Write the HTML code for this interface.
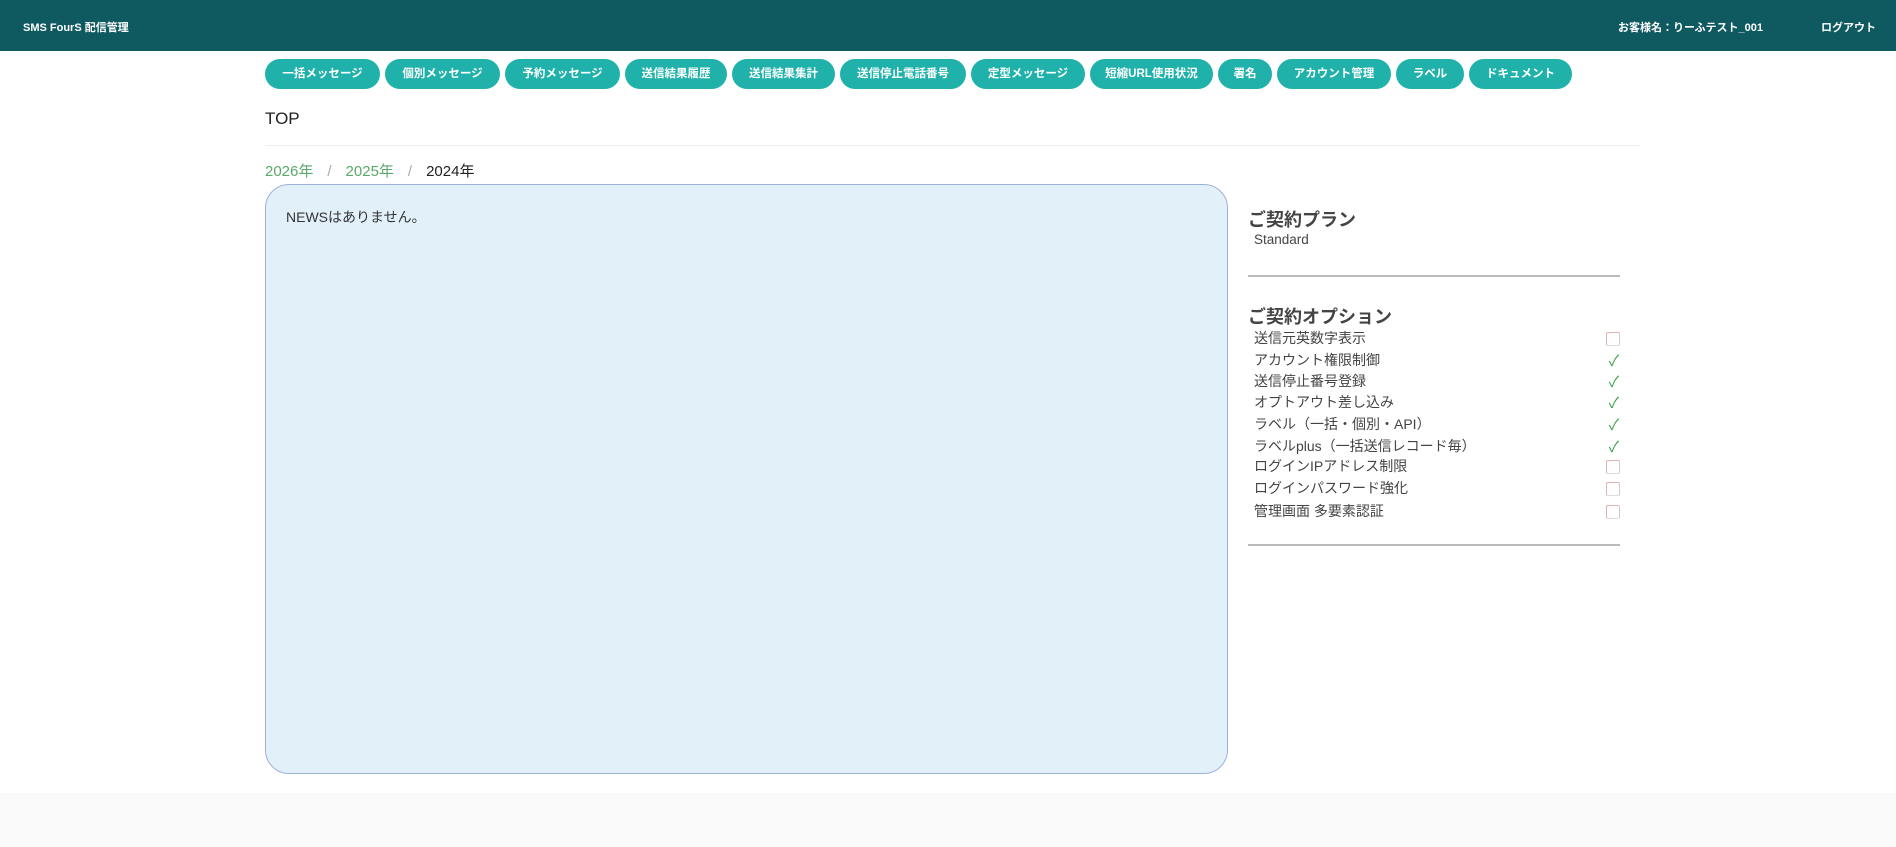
<!DOCTYPE html>
<html><head><meta charset="utf-8"><style>
*{margin:0;padding:0;box-sizing:border-box}
body{width:1896px;height:847px;overflow:hidden;background:#fff;font-family:"Liberation Sans","Noto Sans CJK JP",sans-serif;color:#333;position:relative}
.hd{position:absolute;left:0;top:0;width:1896px;height:51px;background:#0f5960;color:#fff;font-size:11px;font-weight:bold}
.hd span{position:absolute;top:19px}
.nav{position:absolute;top:59px;left:265px;display:flex;gap:5px}
.nav div{height:30px;line-height:30px;background:#20b2aa;color:#fff;font-size:11.5px;font-weight:bold;border-radius:15px;text-align:center}
.top{position:absolute;left:265px;top:109px;font-size:17px;color:#222}
.hr{position:absolute;left:265px;top:145px;width:1375px;height:1px;background:#eee}
.bc{position:absolute;left:265px;top:160px;font-size:15px;color:#222}
.bc a{color:#5aa86a}.bc i{font-style:normal;color:#aaa;margin:0 14px}
.news{position:absolute;left:265px;top:184px;width:963px;height:590px;background:#e2f0fa;border:1px solid #9fb0d8;border-radius:24px;padding:22px 20px;font-size:14px}
h3{position:absolute;left:1248px;font-size:18px;font-weight:bold;color:#444}
.line{position:absolute;left:1248px;width:372px;height:2px;background:#bbb}
.row{position:absolute;left:1254px;width:366px;font-size:14px;color:#444;height:20px}
.cb{position:absolute;right:0;top:4px;width:14px;height:14px;border:1px solid #e5b0b0;border-radius:2px;border-color:#e5b0b0 #ccc #ddd #e5b0b0}
.ck{position:absolute;right:1px;top:0px;color:#3aa34a;font-size:15px;font-weight:normal}
.ft{position:absolute;left:0;top:793px;width:1896px;height:54px;background:#fafafa}
</style></head><body>
<div class="hd"><span style="left:23px">SMS FourS 配信管理</span><span style="left:1618px">お客様名：りーふテスト_001</span><span style="left:1821px">ログアウト</span></div>
<div class="nav">
<div style="width:115px">一括メッセージ</div><div style="width:115px">個別メッセージ</div><div style="width:115px">予約メッセージ</div><div style="width:102px">送信結果履歴</div><div style="width:103px">送信結果集計</div><div style="width:126px">送信停止電話番号</div><div style="width:114px">定型メッセージ</div><div style="width:123px">短縮URL使用状況</div><div style="width:54px">署名</div><div style="width:114px">アカウント管理</div><div style="width:68px">ラベル</div><div style="width:103px">ドキュメント</div>
</div>
<div class="top">TOP</div>
<div class="hr"></div>
<div class="bc"><a>2026年</a><i>/</i><a>2025年</a><i>/</i>2024年</div>
<div class="news">NEWSはありません。</div>
<h3 style="top:206px">ご契約プラン</h3>
<div class="row" style="top:232px;font-size:13.5px">Standard</div>
<div class="line" style="top:275px"></div>
<h3 style="top:303px">ご契約オプション</h3>
<div class="row" style="top:328px">送信元英数字表示<div class="cb"></div></div>
<div class="row" style="top:350px">アカウント権限制御<span class="ck">✓</span></div>
<div class="row" style="top:371px">送信停止番号登録<span class="ck">✓</span></div>
<div class="row" style="top:392px">オプトアウト差し込み<span class="ck">✓</span></div>
<div class="row" style="top:414px">ラベル（一括・個別・API）<span class="ck">✓</span></div>
<div class="row" style="top:436px">ラベルplus（一括送信レコード毎）<span class="ck">✓</span></div>
<div class="row" style="top:456px">ログインIPアドレス制限<div class="cb"></div></div>
<div class="row" style="top:478px">ログインパスワード強化<div class="cb"></div></div>
<div class="row" style="top:501px">管理画面 多要素認証<div class="cb"></div></div>
<div class="line" style="top:544px"></div>
<div class="ft"></div>
</body></html>
